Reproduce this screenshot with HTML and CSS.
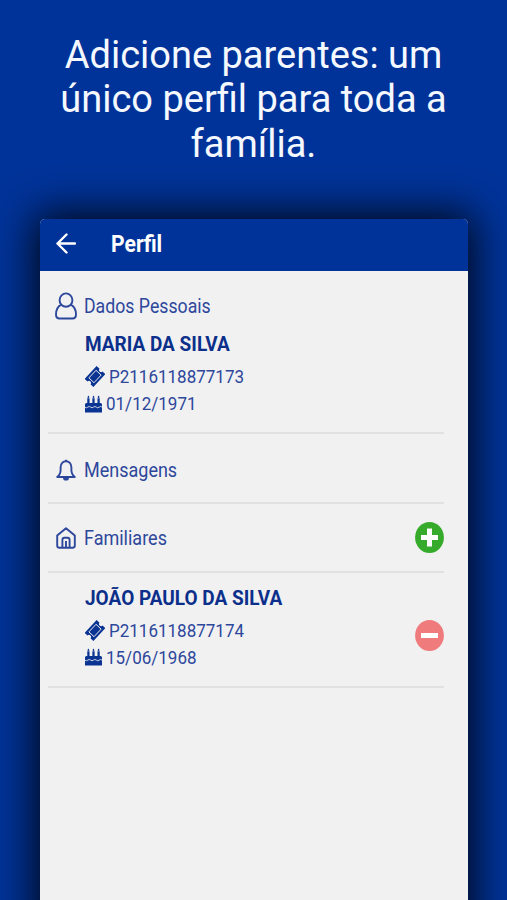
FILE: index.html
```html
<!DOCTYPE html>
<html lang="pt-BR">
<head>
  <meta charset="UTF-8" />
  <meta name="viewport" content="width=device-width, initial-scale=1" />
  <title>Perfil</title>
  <link rel="stylesheet" href="styles.css">
</head>
<body>
  <svg class="sprite" aria-hidden="true">
    <symbol id="ticket" viewBox="0 0 20 20">
      <g transform="rotate(-47 10 10)">
        <path fill="currentColor" d="M1.2 4h17.6v4a2 2 0 0 0 0 4v4H1.2v-4a2 2 0 0 0 0-4z"/>
        <rect x="4.8" y="6.5" width="10.4" height="7" fill="none" stroke="#f1f1f2" stroke-width="0.9"/>
      </g>
    </symbol>
    <symbol id="cake" viewBox="0 0 18 18">
      <path fill="currentColor" d="M2.4 3h2.4v6H2.4zM7.8 3h2.4v6H7.8zM13.2 3h2.4v6h-2.4zM3.6 0l1 1.6a1 1 0 1 1-2 0zM9 0l1 1.6a1 1 0 1 1-2 0zM14.4 0l1 1.6a1 1 0 1 1-2 0zM1.6 8h14.8A1.6 1.6 0 0 1 18 9.6V18H0V9.6A1.6 1.6 0 0 1 1.6 8z"/>
      <path fill="none" stroke="#f1f1f2" stroke-width="0.9" d="M0 12.3q1.5 1.4 3 0t3 0 3 0 3 0 3 0 3 0"/>
    </symbol>
  </svg>

  <h1>Adicione parentes: um<br>único perfil para toda a<br>família.</h1>

  <div class="phone">
    <header>
      <svg class="back" viewBox="0 0 20 20"><path d="M19 10H1.5M10.5 1L1.5 10l9 9"/></svg>
      <h2>Perfil</h2>
    </header>

    <section class="personal">
      <div class="menu">
        <svg class="user" viewBox="0 0 22 28"><path d="M6.2 12.7A6.4 6.8 0 1 1 15.8 12.7C19 14.5 21 18 21 22.5Q21 26.5 17.5 26.5H4.5Q1 26.5 1 22.5C1 18 3 14.5 6.2 12.7zM6.2 12.7Q11 16.9 15.8 12.7"/></svg>
        <span class="dados">Dados Pessoais</span>
      </div>
      <div class="person">
        <h3>MARIA DA SILVA</h3>
        <p><svg class="ticket"><use href="#ticket"/></svg><span>P2116118877173</span></p>
        <p><svg class="cake"><use href="#cake"/></svg><span>01/12/1971</span></p>
      </div>
    </section>

    <section class="messages">
      <div class="menu">
        <svg class="bell" viewBox="0 0 20 22"><path d="M10 .8v1.6M1.2 18H18.8Q15.4 15.5 15.4 11V8.2A5.4 6 0 0 0 4.6 8.2V11Q4.6 15.5 1.2 18z"/><path class="solid" d="M7 18.4h6a3 3.2 0 0 1-6 0z"/></svg>
        <span>Mensagens</span>
      </div>
    </section>

    <section class="family">
      <div class="menu">
        <svg class="house" viewBox="0 0 20 22"><path d="M1.2 8.5L10 1.2l8.8 7.3V18.5Q18.8 20.8 16.5 20.8H3.5Q1.2 20.8 1.2 18.5zM6.4 20.5V13.2Q6.4 10.8 8.3 10.8h3.4Q13.6 10.8 13.6 13.2V20.5M10 14v6.5"/></svg>
        <span>Familiares</span>
      </div>
      <svg class="round" viewBox="0 0 29 31"><ellipse fill="#36ab2b" cx="14.5" cy="15.5" rx="14.4" ry="15.4"/><path fill="#fff" d="M12 6.5h5V13h6v5h-6v6.5h-5V18H6v-5h6z"/></svg>
    </section>

    <section class="relative">
      <div class="person">
        <h3>JOÃO PAULO DA SILVA</h3>
        <p><svg class="ticket"><use href="#ticket"/></svg><span>P2116118877174</span></p>
        <p><svg class="cake"><use href="#cake"/></svg><span>15/06/1968</span></p>
      </div>
      <svg class="round" viewBox="0 0 29 31"><ellipse fill="#ef7b7d" cx="14.5" cy="15.5" rx="14.4" ry="15.4"/><path fill="#fff" d="M6 13h17v5H6z"/></svg>
    </section>
  </div>
</body>
</html>
```
FILE: styles.css
```css
* {
  box-sizing: border-box;
}
body {
  margin: 0;
  height: 900px;
  overflow: hidden;
  background-color: #003399;
  color: #2d479b;
  font-family: Roboto, sans-serif;
}
.sprite {
  display: none;
}
h1, h2, h3, p {
  margin: 0;
}
h1 {
  height: 219px;
  padding-top: 32.5px;
  color: #f5f9ff;
  font-size: 38px;
  font-weight: 400;
  line-height: 44.5px;
  text-align: center;
  white-space: nowrap;
}
.phone {
  width: 428px;
  height: 720px;
  margin-left: 40px;
  background-color: #f1f1f2;
  border-radius: 5px 5px 0 0;
  box-shadow: 0 0 40px 6px rgba(0, 0, 0, 0.85);
}
header {
  display: flex;
  align-items: center;
  height: 52px;
  padding: 0 16px;
  background-color: #003399;
  border-radius: 5px 5px 0 0;
  color: #fff;
}
h2 {
  margin-left: 35px;
  font-size: 23px;
  font-weight: 700;
  line-height: 50px;
  transform: scaleX(0.92);
  transform-origin: left;
}
svg {
  flex: none;
  fill: none;
  stroke-linejoin: round;
}
.back {
  width: 20px;
  height: 21px;
  margin-bottom: 4px;
  stroke: #fff;
  stroke-width: 2.4;
  stroke-linecap: round;
}
section {
  display: flex;
  width: 396px;
  margin-left: 8px;
  border-bottom: 2px solid #e0e1e3;
}
.personal {
  flex-direction: column;
  height: 163px;
  padding-top: 21px;
}
.messages {
  align-items: center;
  height: 70px;
  padding-top: 3px;
}
.family {
  align-items: center;
  justify-content: space-between;
  height: 69px;
}
.family .menu {
  padding-top: 1px;
}
.relative {
  align-items: center;
  justify-content: space-between;
  height: 115px;
}
.menu {
  display: flex;
  align-items: center;
  padding-left: 7px;
  font-size: 20px;
  line-height: 28px;
}
.menu svg {
  stroke: #2d479b;
  stroke-width: 1.9;
}
.menu span {
  margin-left: 7px;
  transform: scaleX(0.9);
  transform-origin: left;
}
.menu .dados {
  transform: scaleX(0.885);
}
.user {
  width: 22px;
  height: 28px;
}
.bell, .house {
  width: 20px;
  height: 22px;
  margin: 0 1px;
}
.menu .solid {
  fill: #2d479b;
  stroke: none;
}
.person {
  padding-left: 37px;
}
h3 {
  color: #0b2f8a;
  font-size: 21px;
  font-weight: 700;
  line-height: 28px;
  white-space: nowrap;
  transform: scaleX(0.905);
  transform-origin: left;
}
.personal h3 {
  margin-top: 10px;
}
.person p {
  display: flex;
  align-items: center;
  height: 27px;
  font-size: 18px;
}
.person p span {
  margin-left: 4px;
  transform: scaleX(0.945);
  transform-origin: left;
}
.person h3 + p {
  margin-top: 5px;
}
.relative .person {
  margin-top: -5px;
}
.ticket {
  width: 20px;
  height: 21px;
  color: #0b3492;
}
.cake {
  width: 17px;
  height: 18px;
  color: #0b3492;
}
.round {
  width: 29px;
  height: 31px;
}
.relative .round {
  margin-top: 12px;
}
```
